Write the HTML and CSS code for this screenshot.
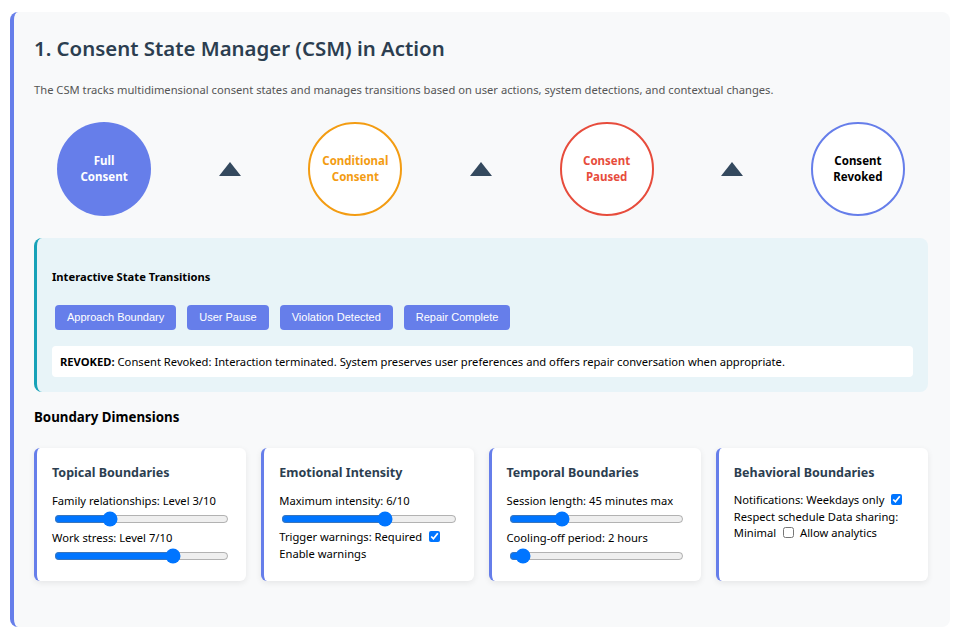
FILE: index.html
```html
<!DOCTYPE html>
<html>
<head>
<meta charset="utf-8">
<link rel="stylesheet" href="styles.css">
</head>
<body>
<section class="panel">
  <h2 class="title">1. Consent State Manager (CSM) in Action</h2>
  <p class="desc">The CSM tracks multidimensional consent states and manages transitions based on user actions, system detections, and contextual changes.</p>

  <div class="states">
    <div class="state full">Full<br>Consent</div>
    <div class="arrow"><span class="tri"></span></div>
    <div class="state cond">Conditional<br>Consent</div>
    <div class="arrow"><span class="tri"></span></div>
    <div class="state paused">Consent<br>Paused</div>
    <div class="arrow"><span class="tri"></span></div>
    <div class="state revoked">Consent<br>Revoked</div>
  </div>

  <div class="demo">
    <h4 class="demo-title">Interactive State Transitions</h4>
    <div class="buttons">
      <button class="btn">Approach Boundary</button>
      <button class="btn">User Pause</button>
      <button class="btn">Violation Detected</button>
      <button class="btn">Repair Complete</button>
    </div>
    <div class="status"><strong>REVOKED:</strong> Consent Revoked: Interaction terminated. System preserves user preferences and offers repair conversation when appropriate.</div>
  </div>

  <h4 class="sub">Boundary Dimensions</h4>
  <div class="cards">
    <div class="card">
      <h4>Topical Boundaries</h4>
      <label class="lbl">Family relationships: Level 3/10</label>
      <input type="range" min="0" max="10" value="3" class="rng">
      <label class="lbl">Work stress: Level 7/10</label>
      <input type="range" min="0" max="10" value="7" class="rng">
    </div>
    <div class="card">
      <h4>Emotional Intensity</h4>
      <label class="lbl">Maximum intensity: 6/10</label>
      <input type="range" min="0" max="10" value="6" class="rng">
      <div class="text">Trigger warnings: Required <input type="checkbox" checked class="chk"> Enable warnings</div>
    </div>
    <div class="card">
      <h4>Temporal Boundaries</h4>
      <label class="lbl">Session length: 45 minutes max</label>
      <input type="range" min="15" max="120" value="45" class="rng">
      <label class="lbl">Cooling-off period: 2 hours</label>
      <input type="range" min="1" max="24" value="2" class="rng">
    </div>
    <div class="card">
      <h4>Behavioral Boundaries</h4>
      <div class="text">Notifications: Weekdays only <input type="checkbox" checked class="chk"> Respect schedule Data sharing: Minimal <input type="checkbox" class="chk"> Allow analytics</div>
    </div>
  </div>
</section>
</body>
</html>
```
FILE: styles.css
```css
html, body {
  background: #ffffff;
}
body {
  margin: 12px 27px 12px 10px;
  font-family: "Noto Sans", "Open Sans", sans-serif;
  color: #000;
}
.panel {
  background: #f8f9fa;
  border-left: 4px solid #667eea;
  border-radius: 8px;
  padding: 20px 22px 20px 20px;
}
.title {
  margin: 0 0 17px;
  font-size: 20.4px;
  line-height: 32px;
  font-weight: 600;
  color: #2c3e50;
}
.desc {
  margin: 0;
  font-size: 11.2px;
  line-height: 18px;
  color: #555;
}
.states {
  display: flex;
  justify-content: space-around;
  align-items: center;
  margin: 23px 0 22px;
}
.state {
  width: 94px;
  height: 94px;
  box-sizing: border-box;
  border-radius: 50%;
  display: flex;
  align-items: center;
  justify-content: center;
  text-align: center;
  font-size: 11.5px;
  font-weight: 700;
  line-height: 16px;
  background: #fff;
}
.full {
  background: #667eea;
  color: #fff;
}
.cond {
  border: 2px solid #f39c12;
  color: #f39c12;
}
.paused {
  border: 2px solid #e74c3c;
  color: #e74c3c;
}
.revoked {
  border: 2px solid #667eea;
  color: #000;
}
.arrow {
  width: 65px;
  display: flex;
  justify-content: center;
}
.tri {
  width: 0;
  height: 0;
  border-left: 11px solid transparent;
  border-right: 11px solid transparent;
  border-bottom: 14px solid #34495e;
}
.demo {
  background: #e8f4f8;
  border-left: 3px solid #17a2b8;
  border-radius: 8px;
  padding: 15px;
}
.demo-title {
  margin: 16px 0 16px;
  font-size: 11.2px;
  line-height: 16px;
  font-weight: 700;
}
.buttons {
  display: flex;
  gap: 11px;
  padding-left: 3px;
}
.btn {
  font-family: "Liberation Sans", Arial, sans-serif;
  font-size: 11px;
  line-height: 13px;
  color: #fff;
  background: #667eea;
  border: none;
  border-radius: 4px;
  padding: 6px 12px;
  margin: 4px 0 0;
}
.status {
  margin-top: 16px;
  background: #fff;
  border-radius: 4px;
  padding: 7px 8px;
  font-size: 11.2px;
  line-height: 17px;
}
.sub {
  margin: 17px 0 22px;
  font-size: 13.3px;
  line-height: 17px;
  font-weight: 700;
}
.cards {
  display: grid;
  grid-template-columns: repeat(4, 1fr);
  gap: 15px;
  margin-bottom: 26px;
}
.card {
  background: #fff;
  border-left: 3px solid #667eea;
  border-radius: 6px;
  padding: 16px 15px 15px;
  box-shadow: 0 2px 6px rgba(0, 0, 0, 0.08);
}
.card h4 {
  margin: 0 0 11px;
  font-size: 12.5px;
  line-height: 17px;
  font-weight: 700;
  color: #2c3e50;
}
.lbl {
  display: block;
  font-size: 11.2px;
  line-height: 17px;
}
.rng {
  display: block;
  width: calc(100% - 4px);
  margin: 2px 2px 2px;
}
.text {
  font-size: 11.2px;
  line-height: 16.5px;
}
.chk {
  width: 11px;
  height: 11px;
  margin: 0 3px 0 4px;
  vertical-align: -1px;
}
```
